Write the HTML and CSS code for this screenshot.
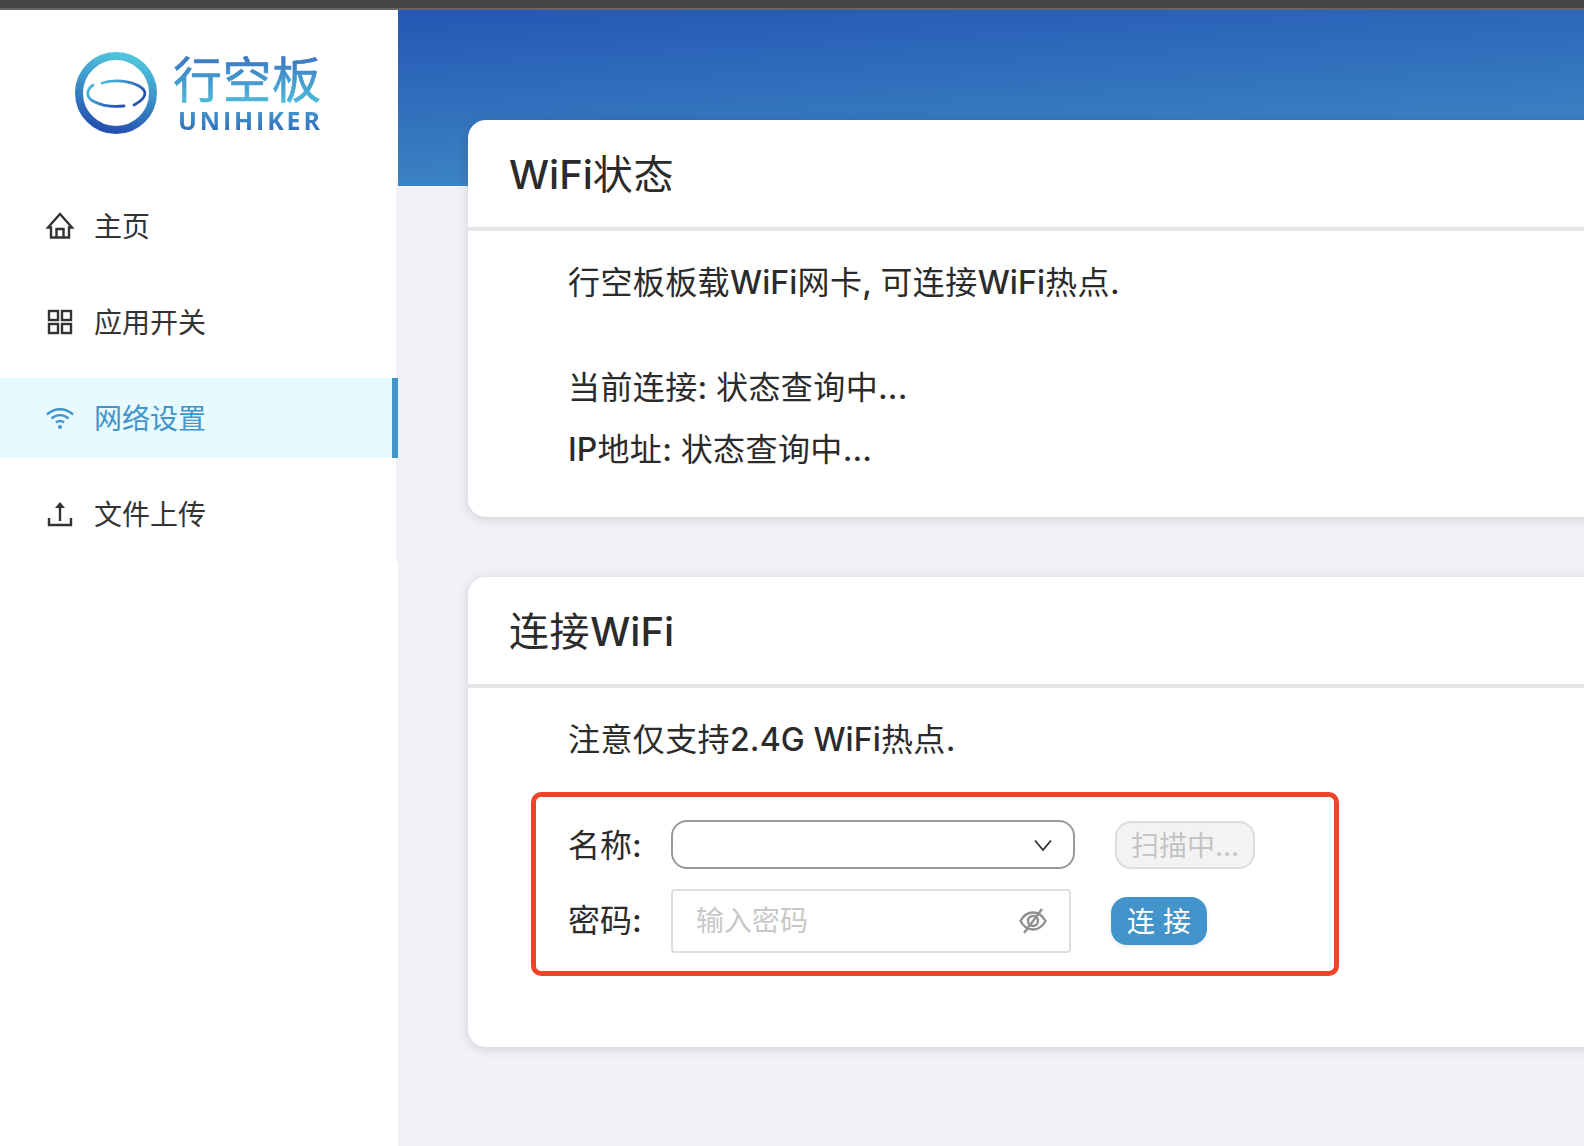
FILE: index.html
```html
<!DOCTYPE html>
<html lang="zh-CN">
<head>
<meta charset="utf-8">
<title>行空板 UNIHIKER</title>
<link rel="stylesheet" href="styles.css">
</head>
<body>
<div class="topbar"></div>
<div class="app">
  <aside class="sidebar">
    <div class="logo">
      <svg class="logo-svg" width="398" height="168" viewBox="0 10 398 168">
        <defs>
          <linearGradient id="ring" x1="0.6" y1="0" x2="0.35" y2="1">
            <stop offset="0" stop-color="#50c4dc"/>
            <stop offset="0.5" stop-color="#3a8cc6"/>
            <stop offset="1" stop-color="#2450b0"/>
          </linearGradient>
          <linearGradient id="oval" x1="0" y1="0" x2="1" y2="0.4">
            <stop offset="0" stop-color="#50c0dc"/>
            <stop offset="1" stop-color="#2656b2"/>
          </linearGradient>
          <linearGradient id="cn" x1="0" y1="0" x2="0" y2="1">
            <stop offset="0" stop-color="#3a6fc0"/>
            <stop offset="1" stop-color="#4fc4dc"/>
          </linearGradient>
          <linearGradient id="en" x1="0" y1="0" x2="0" y2="1">
            <stop offset="0" stop-color="#47a6d4"/>
            <stop offset="1" stop-color="#2c62b6"/>
          </linearGradient>
        </defs>
        <circle cx="116" cy="93" r="37" fill="none" stroke="url(#ring)" stroke-width="8"/>
        <path d="M93 85C86 90 86 97 93 101C102 106 115 107 124 106" fill="none" stroke="url(#oval)" stroke-width="2.800" stroke-linecap="round"/>
        <path d="M102 83C115 79 130 81 139 86C148 91 147 98 134 105" fill="none" stroke="url(#oval)" stroke-width="2.800" stroke-linecap="round"/>
        <text class="logo-cn" x="173" y="98" textLength="148" fill="url(#cn)" stroke="url(#cn)" stroke-width="0.6">行空板</text>
        <text class="logo-en" x="178" y="130" textLength="142" fill="url(#en)">UNIHIKER</text>
      </svg>
    </div>
    <nav class="menu">
      <a class="menu-item">
        <svg class="menu-icon" viewBox="0 0 28 28"><path d="M14 2 2 15.500h3v10h18v-10h3ZM10.500 25.500V17h7v8.500" fill="none" stroke="currentColor" stroke-width="2.400"/></svg>
        <span class="menu-text">主页</span>
      </a>
      <a class="menu-item">
        <svg class="menu-icon" viewBox="0 0 28 28"><g fill="none" stroke="currentColor" stroke-width="2.400"><rect x="3" y="3" width="9" height="9"/><rect x="16" y="3" width="9" height="9"/><rect x="3" y="16" width="9" height="9"/><rect x="16" y="16" width="9" height="9"/></g></svg>
        <span class="menu-text">应用开关</span>
      </a>
      <a class="menu-item active">
        <svg class="menu-icon" viewBox="0 0 28 28"><g fill="none" stroke="currentColor" stroke-width="2.400"><path d="M1 10.500C8.500 3.500 19.500 3.500 27 10.500"/><path d="M5.500 14.500C10.500 10 17.500 10 22.500 14.500"/><path d="M10 18.500C12.500 16.500 15.500 16.500 18 18.500"/></g><circle cx="14" cy="23" r="2" fill="currentColor"/></svg>
        <span class="menu-text">网络设置</span>
      </a>
      <a class="menu-item">
        <svg class="menu-icon" viewBox="0 0 28 28"><path d="M3 18v7h22v-7" fill="none" stroke="currentColor" stroke-width="2.400"/><path d="M14 21V6" fill="none" stroke="currentColor" stroke-width="2.400"/><path d="M14 2l-5 6h10Z" fill="currentColor"/></svg>
        <span class="menu-text">文件上传</span>
      </a>
    </nav>
  </aside>
  <main class="main">
    <div class="banner"></div>
    <section class="card status-card">
      <h2 class="card-title"><span class="lt">WiFi</span>状态</h2>
      <div class="card-body">
        <p class="intro">行空板板载<span class="lt">WiFi</span>网卡<span class="lt">, </span>可连接<span class="lt">WiFi</span>热点<span class="lt">.</span></p>
        <p class="status first">当前连接<span class="lt">: </span>状态查询中<span class="lt">...</span></p>
        <p class="status"><span class="lt">IP</span>地址<span class="lt">: </span>状态查询中<span class="lt">...</span></p>
      </div>
    </section>
    <section class="card connect-card">
      <h2 class="card-title">连接<span class="lt">WiFi</span></h2>
      <div class="card-body">
        <p class="intro">注意仅支持<span class="lt">2.4G WiFi</span>热点<span class="lt">.</span></p>
      </div>
      <form class="wifi-form">
        <div class="form-row name-row">
          <label class="form-label">名称<span class="lt">:</span></label>
          <div class="select">
            <svg class="chevron" viewBox="0 0 18 12"><path d="M1 1.500 9 11l8-9.500" fill="none" stroke="currentColor" stroke-width="1.800"/></svg>
          </div>
          <button type="button" class="btn btn-scan" disabled>扫描中...</button>
        </div>
        <div class="form-row pwd-row">
          <label class="form-label">密码<span class="lt">:</span></label>
          <div class="input-wrap">
            <input class="input" type="password" placeholder="输入密码">
            <svg class="eye" viewBox="0 0 28 26"><g fill="none" stroke="#8f8f8f" stroke-width="2.400"><path d="M1.500 13C5 6.500 9.500 4.500 14 4.500S23 6.500 26.500 13C23 19.500 18.500 21.500 14 21.500S5 19.500 1.500 13Z"/><circle cx="14" cy="13" r="5"/><path d="M23 1 5 25"/></g></svg>
          </div>
          <button type="button" class="btn btn-connect">连 接</button>
        </div>
      </form>
    </section>
  </main>
</div>
</body>
</html>
```
FILE: styles.css
```css
* { box-sizing: border-box; }
html, body { margin: 0; height: 100%; overflow: hidden; }
body {
  background: #fff;
  color: #2b2b2b;
  font-family: "Inter", "Noto Sans CJK SC", sans-serif;
}
.lt { font-weight: 500; letter-spacing: .1px; }
.topbar {
  height: 10px;
  background: #454545;
  border-bottom: 2px solid #666;
}
.app {
  display: flex;
  height: 1136px;
}
.sidebar {
  width: 398px;
  flex: none;
  background: #fff;
}
.logo { height: 168px; }
.logo-svg { display: block; filter: blur(0.5px); }
.logo-cn { font-size: 49px; font-weight: 400; }
.logo-en { font-size: 25px; font-weight: 700; font-family: "Open Sans", sans-serif; }
.menu {
  padding: 8px 0;
  border-right: 2px solid #f0f2f7;
  display: flex;
  flex-direction: column;
  gap: 16px;
}
.menu-item {
  height: 80px;
  margin-right: -2px;
  padding-left: 46px;
  display: flex;
  align-items: center;
  gap: 20px;
  font-size: 28px;
  color: #333;
}
.menu-text { padding-bottom: 2px; }
.menu-item.active {
  background: #e6faff;
  color: #4394cb;
  border-right: 6px solid #4394cb;
}
.menu-icon { width: 28px; height: 28px; flex: none; }
.main {
  position: relative;
  flex: 1;
  min-width: 0;
  background: #f0f2f7;
  overflow: hidden;
  padding: 110px 0 0 70px;
}
.banner {
  position: absolute;
  left: 0; top: 0; right: 0;
  height: 176px;
  background: linear-gradient(177deg, #2557b4, #4292c8);
}
.card {
  position: relative;
  width: 1300px;
  background: #fff;
  border-radius: 18px;
  box-shadow: 0 2px 12px rgba(0, 0, 0, .14);
}
.status-card { height: 397px; margin-bottom: 60px; }
.connect-card { height: 470px; }
.card-title {
  margin: 0;
  height: 111px;
  padding: 0 41px;
  border-bottom: 4px solid #e4e6ea;
  font-size: 40px;
  font-weight: 400;
  letter-spacing: .6px;
  line-height: 109px;
  color: #2b2b2b;
}
.card-title .lt { font-weight: 500; letter-spacing: 0; }
.card-body { padding: 0 0 0 100px; font-size: 32px; letter-spacing: .4px; }
.card-body p { margin: 0; line-height: 48px; }
.intro { padding-top: 28px; }
.status.first { margin-top: 57px !important; }
.status + .status { margin-top: 14px !important; }
.wifi-form {
  width: 808px;
  height: 184px;
  margin: 28px 0 0 63px;
  border: 5px solid #ef4427;
  border-radius: 10px;
  padding: 23px 0 0 32px;
}
.form-row { display: flex; align-items: center; }
.name-row { height: 49px; margin-bottom: 20px; }
.pwd-row { height: 64px; }
.form-label { width: 103px; flex: none; font-size: 32px; }
.name-row .form-label { padding-bottom: 4px; }
.pwd-row .form-label { padding-bottom: 6px; }
.select {
  width: 404px;
  height: 49px;
  border: 2px solid #999;
  border-radius: 16px;
  display: flex;
  align-items: center;
  justify-content: flex-end;
  padding-right: 21px;
}
.chevron { width: 18px; height: 12px; color: #333; }
.input-wrap {
  position: relative;
  width: 400px;
  height: 64px;
}
.input {
  width: 100%;
  height: 100%;
  border: 2px solid #ddd;
  border-radius: 4px;
  padding: 0 70px 0 23px;
  font: inherit;
  font-size: 28px;
  outline: none;
}
.input::placeholder { color: #c8c8c8; opacity: 1; }
.eye {
  position: absolute;
  right: 24px;
  top: 19px;
  width: 28px;
  height: 26px;
}
.btn {
  margin-left: 40px;
  font: inherit;
  font-size: 28px;
  border-radius: 16px;
  padding: 0 0 2px;
}
.btn-scan {
  width: 140px;
  height: 48px;
  background: #f3f3f3;
  border: 2px solid #ddd;
  color: #c4c4c4;
}
.btn-connect {
  width: 96px;
  height: 48px;
  background: #4394cb;
  border: 0;
  color: #fff;
  box-shadow: 0 2px 4px rgba(0, 0, 0, .08);
}
```
